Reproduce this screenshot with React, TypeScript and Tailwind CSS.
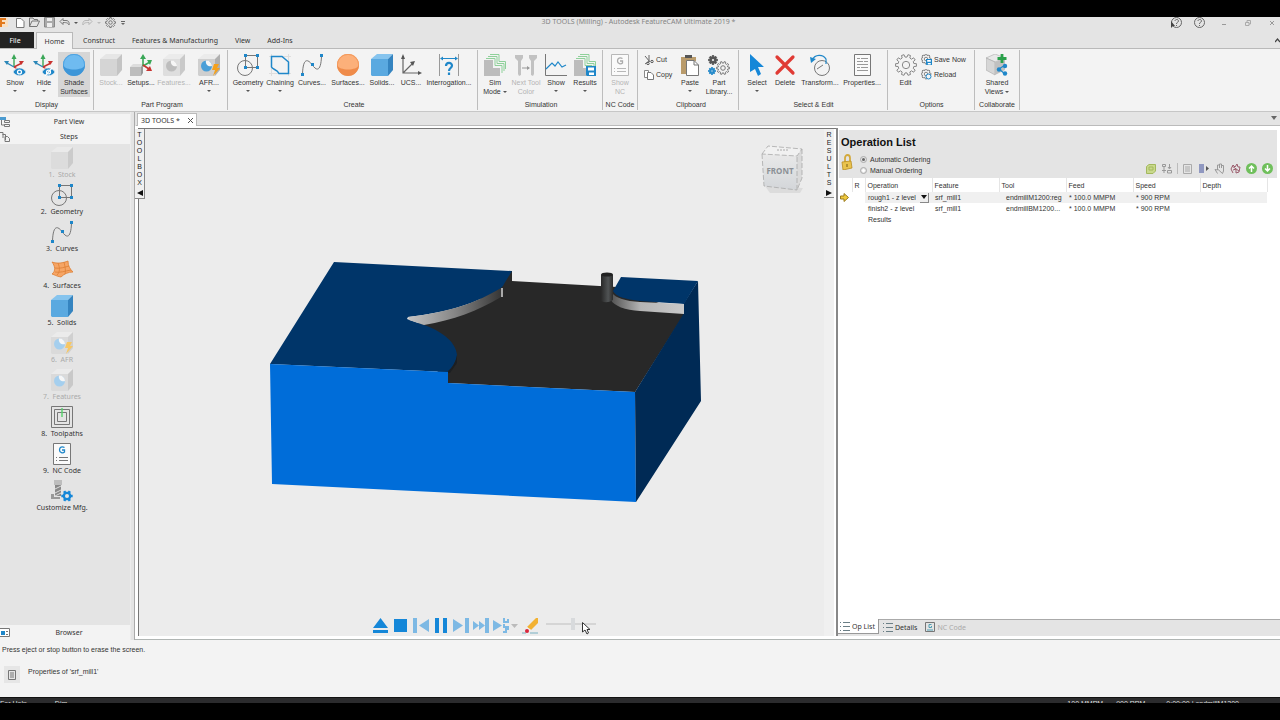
import type { ReactNode } from "react";

const BLUE = "#1f87c9";

function gearPath(cx: number, cy: number, r: number, teeth: number) {
    const pts: string[] = [];
    const step = (Math.PI * 2) / teeth;
    for (let i = 0; i < teeth; i++) {
        const a = i * step;
        const corners = [
            [a - step * 0.3, r * 0.76],
            [a - step * 0.2, r],
            [a + step * 0.2, r],
            [a + step * 0.3, r * 0.76],
        ];
        corners.forEach(([t, d]) => pts.push(`${(cx + Math.cos(t) * d).toFixed(2)},${(cy + Math.sin(t) * d).toFixed(2)}`));
    }
    return `M${pts.join("L")}Z`;
}

type GearProps = { cx: number; cy: number; r: number; color: string; fill?: string; teeth?: number; hole?: number };

function Gear({ cx, cy, r, color, fill = "none", teeth = 8, hole = 0.35 }: GearProps) {
    return (
        <g>
            <path d={gearPath(cx, cy, r, teeth)} fill={fill} stroke={color} strokeWidth="1" strokeLinejoin="round" />
            <circle cx={cx} cy={cy} r={r * hole} fill={fill === "none" ? "none" : "#f3f3f3"} stroke={color} strokeWidth="1" />
        </g>
    );
}

function Svg({ size = 22, children }: { size?: number; children: ReactNode }) {
    return (
        <svg width={size} height={size} viewBox={`0 0 ${size} ${size}`} fill="none" aria-hidden="true" className="shrink-0">
            {children}
        </svg>
    );
}

function CubeShape({ front, top, side }: { front: string; top: string; side: string }) {
    return (
        <g>
            <path d="M0 5L6 0H22L17 5Z" fill={top} />
            <path d="M17 5L22 0V16L17 22Z" fill={side} />
            <path d="M0 5H17V22H1L0 21Z" fill={front} />
        </g>
    );
}

function AxesShape() {
    return (
        <g strokeWidth="1.4">
            <path d="M10 13V4" stroke="#3aa757" />
            <path d="M7.500 5L10 0L12.500 5Z" fill="#3aa757" />
            <path d="M10 13L18 9" stroke="#c8322f" />
            <path d="M15 7L20 7L17 11Z" fill="#c8322f" />
            <path d="M10 13L3 9" stroke="#2b87b8" />
            <path d="M0 7L5 7L3 11Z" fill="#2b87b8" />
            <path d="M10 13L17 17" stroke="#c8322f" />
        </g>
    );
}

function EyeAxes({ hidden = false }: { hidden?: boolean }) {
    return (
        <Svg>
            <AxesShape />
            <path d="M9 18C12 12.500 19 12.500 22 18C19 23 12 23 9 18Z" fill={BLUE} stroke="#f3f3f3" strokeWidth=".7" />
            <circle cx="15.500" cy="18" r="2.600" fill="#fff" />
            <circle cx="15.500" cy="18" r="1.300" fill={BLUE} />
            {hidden && <path d="M12 22L19 14" stroke="#fff" strokeWidth="1.200" />}
        </Svg>
    );
}

function SphereIcon({ light, dark }: { light: string; dark: string }) {
    return (
        <Svg>
            <circle cx="11" cy="11" r="11" fill={dark} />
            <path d="M0 11A11 11 0 0 1 22 11C20 17 2 17 0 11Z" fill={light} />
            <circle cx="11" cy="11" r="10.600" stroke={dark} strokeWidth=".6" />
        </Svg>
    );
}

function CubeIcon({ tone }: { tone: "blue" | "gray" | "pale" }) {
    if (tone === "blue") return <Svg><CubeShape front="#5aa9e0" top="#86c4ee" side="#3584c0" /></Svg>;
    if (tone === "gray") return <Svg><CubeShape front="#d5d5d5" top="#e6e6e6" side="#c4c4c4" /></Svg>;
    return <Svg><CubeShape front="#dcdcdc" top="#eaeaea" side="#cbcbcb" /></Svg>;
}

type FeatureIconProps = { ball: string; bolt?: string; front?: string; side?: string };

function FeatureIcon({ ball, bolt, front = "#dedede", side = "#c9c9c9" }: FeatureIconProps) {
    return (
        <Svg>
            <CubeShape front={front} top="#ebebeb" side={side} />
            <circle cx="8.500" cy="12" r="5.500" fill={ball} />
            <path d="M8 6.500A5.500 5.500 0 0 1 14 12C11 13 7 11 8 6.500Z" fill="#f6f6f6" />
            {bolt && <path d="M16 10H21L19 14H22L15 22L17 16H14Z" fill={bolt} />}
        </Svg>
    );
}

function SetupsIcon() {
    return (
        <Svg>
            <path d="M0 13L3 10H13L11 13Z" fill="#ddd" />
            <path d="M11 13L13 10V19L11 22Z" fill="#999" />
            <path d="M0 13H11V22H0Z" fill="#bdbdbd" />
            <path d="M13 12V3M13 12L20 8" stroke="#3aa757" strokeWidth="1.600" />
            <path d="M10 5L13 0L16 5ZM17 6L22 6L20 11Z" fill="#3aa757" />
            <path d="M13 11L19 15" stroke="#c8322f" strokeWidth="1.600" />
            <path d="M20 12L22 17L16 17Z" fill="#c8322f" />
        </Svg>
    );
}

function GeometryIcon() {
    return (
        <Svg>
            <circle cx="8" cy="14" r="7.500" stroke="#777" />
            <path d="M8.500 1.500H20.500V13.500H8.500Z" stroke="#777" />
            <path d="M7 0h3v3H7zM19 0h3v3h-3zM19 12h3v3h-3zM7 12h3v3H7z" fill={BLUE} />
        </Svg>
    );
}

function ChainingIcon() {
    return (
        <Svg>
            <path d="M0 2.500H22M2.500 0V22M19.500 0V22M0 19.500H22" stroke="#dedede" />
            <path d="M2.500 2.500H13L19.500 8V19.500H10C8 15 4 16 2.500 13Z" stroke={BLUE} strokeWidth="1.500" />
        </Svg>
    );
}

function CurvesIcon() {
    return (
        <Svg>
            <path d="M1.500 20C2 5 6 4 11 10.500C16 18 20 17 20.500 2" stroke="#777" />
            <path d="M0 19h3v3H0zM10 9h3v3h-3zM19 0h3v3h-3z" fill={BLUE} />
        </Svg>
    );
}

function UcsIcon() {
    return (
        <Svg>
            <path d="M3 2V19H20M3 19L13 9" stroke="#666" strokeWidth="1.200" />
            <path d="M1 5L3 0L5 5ZM18 17L22 19L18 21ZM10 8L15 7L13 12Z" fill="#555" />
        </Svg>
    );
}

function InterrogationIcon() {
    return (
        <Svg>
            <path d="M1.500 0V22M20.500 0V22" stroke="#999" />
            <path d="M3 4.500H19" stroke={BLUE} />
            <path d="M2 4.500L5 2.500V6.500ZM20 4.500L17 2.500V6.500Z" fill={BLUE} />
            <path d="M8 12C8 8 14 8 14 11.500C14 14 11 14 11 17M11 18.500V21" stroke={BLUE} strokeWidth="2.200" />
        </Svg>
    );
}

function SimShape() {
    return (
        <g>
            <path d="M0 6H9V14H16V22H0Z" fill="#bcbcbc" />
            <path d="M2 4.500H11V11.500H18V19M4 2.500H13V9.500H20V17M6 .500H15V7.500H21.500V15" stroke="#8fd19a" />
        </g>
    );
}

function ToolColorIcon() {
    return (
        <Svg>
            <path d="M0 1H8V4L6 7V21L4 22L3 20V7L0 4ZM14 1H22V4L19 7V20L18 22L16 21V7L14 4Z" fill="#c2c2c2" />
            <path d="M7 14H14" stroke="#999" />
            <path d="M12 12L15 14L12 16Z" fill="#999" />
        </Svg>
    );
}

function ChartIcon() {
    return (
        <Svg>
            <path d="M.500 0V21.500H22" stroke="#777" />
            <path d="M1 15L7 9L10 12L13 8L17 13L21 11" stroke={BLUE} strokeWidth="1.200" />
        </Svg>
    );
}

function FloppyShape({ x, y, size, color }: { x: number; y: number; size: number; color: string }) {
    return (
        <g transform={`translate(${x} ${y}) scale(${size / 10})`}>
            <path d="M0 0H10V10H1L0 9Z" fill={color} />
            <path d="M2 1.500H8V4.500H2ZM3 6.500H8V9H3Z" fill="#fff" />
        </g>
    );
}

function ResultsIcon() {
    return (
        <Svg>
            <SimShape />
            <FloppyShape x={12} y={12} size={10} color={BLUE} />
        </Svg>
    );
}

function CodeIcon({ color, line }: { color: string; line: string }) {
    return (
        <Svg>
            <path d="M2.500 .500H19.500V21.500H2.500Z" stroke={line} fill="#fafafa" />
            <path d="M13.500 4.500C11 3 8.500 4 8.500 7C8.500 10 12 10.500 13.500 9V7H11" stroke={color} strokeWidth="1.300" />
            <path d="M5 14.500H6M8 14.500H17M5 17.500H6M8 17.500H17" stroke={line} />
        </Svg>
    );
}

function PasteIcon() {
    return (
        <Svg>
            <path d="M2 3H17V7H8V20H2Z" fill="#b99b6b" />
            <path d="M6 1H13V4H6Z" fill="#555" />
            <path d="M7.500 6.500H15L19.500 11V21.500H7.500Z" fill="#fff" stroke="#777" />
            <path d="M15 6.500V11H19.500" stroke="#777" />
        </Svg>
    );
}

function LibraryIcon() {
    return (
        <Svg>
            <Gear cx={5} cy={6} r={4.500} color="#555" fill="#555" />
            <Gear cx={4} cy={17} r={3.500} color={BLUE} fill={BLUE} />
            <Gear cx={15} cy={14} r={6.500} color="#777" teeth={10} />
        </Svg>
    );
}

function SelectIcon() {
    return <Svg><path d="M4 0L18 13H12L15 20L12 22L9 15L4 18Z" fill="#1587d8" /></Svg>;
}

function DeleteIcon() {
    return <Svg><path d="M3 3L19 19M19 3L3 19" stroke="#e03a34" strokeWidth="3.200" strokeLinecap="round" /></Svg>;
}

function TransformIcon() {
    return (
        <Svg>
            <circle cx="13" cy="14" r="7.500" stroke="#777" />
            <path d="M8 15L14 11" stroke="#777" />
            <path d="M3 6C6 0 14 0 17 5V10" stroke={BLUE} strokeWidth="1.200" />
            <path d="M1 3L7 5L2 9Z" fill={BLUE} />
        </Svg>
    );
}

function PropertiesIcon() {
    return (
        <Svg>
            <path d="M3.500 .500H19.500V21.500H3.500Z" stroke="#777" fill="#fafafa" />
            <path d="M6 4.500H9M10 4.500H17M6 7.500H12M13 7.500H17M6 10.500H17M6 13.500H9M10 13.500H17M6 16.500H17" stroke="#999" />
        </Svg>
    );
}

function SharedIcon() {
    return (
        <Svg>
            <path d="M9 0L19 4L9 8L0 4Z" fill="#e8e8e8" stroke="#aaa" strokeWidth=".6" />
            <path d="M0 4L9 8V21L0 16Z" fill="#d6d6d6" stroke="#aaa" strokeWidth=".6" />
            <path d="M9 8L19 4V16L9 21Z" fill="#c0c0c0" />
            <path d="M16 0V9M11.500 4.500H20.500" stroke="#2aa14a" strokeWidth="2.800" />
            <path d="M19 11L13 15L19 20" stroke={BLUE} strokeWidth="1.200" />
            <circle cx="19" cy="12" r="2.200" fill={BLUE} />
            <circle cx="13" cy="15.500" r="2.200" fill={BLUE} />
            <circle cx="19" cy="19.500" r="2.200" fill={BLUE} />
        </Svg>
    );
}

function SurfaceIcon() {
    return (
        <Svg>
            <path d="M1 4C6 6 12 5 17 3C17 8 19 11 22 14C17 14 13 16 10 19C5 18 4 17 1 16C5 13 4 8 1 4Z" fill="#f6a565" stroke="#dd7f35" strokeWidth=".8" />
            <path d="M4 10C9 11 14 9 18 8M4 14C9 15 14 13 20 12M7 5C9 10 9 14 6 17M13 4C14 9 15 12 14 16" stroke="#dd7f35" strokeWidth=".8" />
        </Svg>
    );
}

function ToolpathIcon() {
    return (
        <Svg>
            <path d="M.500 .500H21.500V21.500H.500ZM3.500 3.500H18.500V18.500H3.500ZM6.500 6.500H15.500V15.500H6.500Z" stroke="#777" />
            <path d="M11 2V11" stroke="#55d36a" strokeWidth="1.400" />
        </Svg>
    );
}

function CustomizeIcon() {
    return (
        <Svg>
            <path d="M3 0H11V5H3Z" fill="#bdbdbd" />
            <path d="M4 5H10V16H4Z" fill="#888" />
            <path d="M4 9L10 6M4 13L10 10M4 16L10 13" stroke="#ddd" />
            <path d="M0 14H3V17H9V19H0Z" fill="#999" />
            <path d={gearPath(16, 16, 5.800, 6)} fill="#1587d8" />
            <circle cx="16" cy="16" r="2" fill="#e4e4e4" />
        </Svg>
    );
}

function Caret() {
    return <span className="inline-block h-0 w-0 border-x-2 border-t-2 border-x-transparent border-t-[#555]" />;
}

type RibbonButtonProps = {
    icon: ReactNode;
    label: string;
    label2?: string;
    width: string;
    menu?: boolean;
    disabled?: boolean;
    active?: boolean;
}

function RibbonButton({ icon, label, label2, width, menu, disabled, active }: RibbonButtonProps) {
    return (
        <button
            type="button"
            disabled={disabled}
            className={`flex h-[45px] shrink-0 flex-col items-center whitespace-nowrap pt-[2px] leading-[9px] ${width} ${active ? "bg-[#d6d6d6]" : ""} ${disabled ? "text-[#b4b4b4]" : "text-[#333]"}`}
        >
            {icon}
            <span className="mt-[2px]">{label}</span>
            {label2 && (
                <span className="flex items-center gap-[2px]">
                    {label2}
                    {menu && <Caret />}
                </span>
            )}
            {menu && !label2 && <span className="flex h-[8px] items-center"><Caret /></span>}
        </button>
    );
}

function RibbonGroup({ title, width, children }: { title: string; width: string; children: ReactNode }) {
    return (
        <section aria-label={title} className={`my-px flex shrink-0 flex-col justify-between border-r border-[#bdbdbd] pt-[2px] text-[#333] ${width}`}>
            <div className="flex">{children}</div>
            <h2 className="text-center leading-[11px] whitespace-nowrap">{title}</h2>
        </section>
    );
}

function SmallButton({ icon, label }: { icon: ReactNode; label: string }) {
    return (
        <button type="button" className="flex h-[15px] items-center gap-[2px] whitespace-nowrap">
            {icon}
            {label}
        </button>
    );
}

function TitleBar() {
    return (
        <header className="flex h-[15px] items-start justify-between pr-[5px] text-[#666]">
            <div className="flex w-[240px] items-center">
                <svg width="8" height="10" viewBox="0 0 8 10" aria-hidden="true">
                    <path d="M0 0H8V9H0Z" fill="#f8dfc2" />
                    <path d="M0 0H6V2H2V4H5V6H2V9H0Z" fill="#e2791d" />
                </svg>
                <div className="ml-[7px] flex items-center gap-1">
                    <button type="button" aria-label="New"><Svg size={10}><path d="M1.500 .500H6L9 3.500V9.500H1.500Z" fill="#fff" stroke="#777" /></Svg></button>
                    <button type="button" aria-label="Open"><Svg size={11}><path d="M.500 9.500V1H4L5 2.500H8.500V4M.500 9.500L3 4H10.500L8 9.500Z" stroke="#777" /></Svg></button>
                    <button type="button" aria-label="Save"><Svg size={11}><path d="M.500 .500H10.500V10H.500Z" fill="#aaa" stroke="#888" /><path d="M3 1H8V4H3ZM3 6H8V10H3Z" fill="#eee" /></Svg></button>
                    <button type="button" aria-label="Undo"><Svg size={11}><path d="M1 4.500L4 1.500V3.500H7C10 3.500 10.500 6 10 8C9 6 8 5.500 4 5.500V7.500Z" stroke="#777" /></Svg></button>
                    <Caret />
                    <button type="button" aria-label="Redo" disabled><Svg size={11}><path d="M10 4.500L7 1.500V3.500H4C1 3.500 .500 6 1 8C2 6 3 5.500 7 5.500V7.500Z" stroke="#b5b5b5" /></Svg></button>
                    <span className="h-0 w-0 border-x-2 border-t-2 border-x-transparent border-t-[#bbb]" />
                    <button type="button" aria-label="Settings"><Svg size={11}><Gear cx={5.500} cy={5.500} r={5} color="#777" /></Svg></button>
                    <button type="button" aria-label="Customize quick access" className="ml-px"><Svg size={4}><path d="M0 .500H4" stroke="#666" /><path d="M0 2H4L2 4Z" fill="#666" /></Svg></button>
                </div>
            </div>
            <h1 className="font-['Noto_Sans','Open_Sans',sans-serif] leading-[10px] text-[#858585]">3D TOOLS (Milling) - Autodesk FeatureCAM Ultimate 2019 *</h1>
            <div className="flex w-[238px] items-center justify-end gap-3">
                {["Context help", "Help"].map((name) => (
                    <button key={name} type="button" aria-label={name}>
                        <Svg size={11}>
                            <circle cx="5.500" cy="5.500" r="5" stroke="#666" />
                            <path d="M4 4C4 2 7.500 2 7.500 4C7.500 5.500 5.500 5 5.500 7M5.500 8V9" stroke="#666" />
                            {name === "Context help" && <path d="M0 4V11L2 9L4 9Z" fill="#444" />}
                        </Svg>
                    </button>
                ))}
                <button type="button" aria-label="Minimize" className="ml-1"><Svg size={6}><path d="M1 4.500H5" stroke="#999" /></Svg></button>
                <button type="button" aria-label="Restore" className="ml-[6px]"><Svg size={6}><path d="M.500 2.500H4V5.500H.500ZM2 2V.500H5.500V4H4" stroke="#aaa" /></Svg></button>
                <button type="button" aria-label="Close" className="ml-[6px]"><Svg size={6}><path d="M1 1L5 5M5 1L1 5" stroke="#999" /></Svg></button>
            </div>
        </header>
    );
}

function MenuTabs() {
    return (
        <nav className="flex h-[17px] items-stretch border-b border-[#b9b9b9] font-['Noto_Sans','Open_Sans',sans-serif] text-[#333]">
            <button type="button" className="w-[34px] bg-[#222] pr-1 text-white">File</button>
            <button type="button" className="-mb-px ml-[2px] w-[37px] border border-b-0 border-[#b9b9b9] bg-[#f3f3f3]">Home</button>
            <div className="ml-[10px] flex gap-[17px]">
                <button type="button">Construct</button>
                <button type="button">Features &amp; Manufacturing</button>
                <button type="button">View</button>
                <button type="button">Add-Ins</button>
            </div>
            <button type="button" aria-label="Collapse ribbon" className="ml-auto"><Svg size={5}><path d="M0 4L2.500 1L5 4" stroke="#444" strokeWidth="1.200" /></Svg></button>
        </nav>
    );
}

function Ribbon() {
    return (
        <div className="flex h-[63px] border-b border-[#c6c6c6] bg-[#f3f3f3]">
            <RibbonGroup title="Display" width="w-[94px]">
                <RibbonButton icon={<EyeAxes />} label="Show" width="w-[30px]" menu />
                <RibbonButton icon={<EyeAxes hidden />} label="Hide" width="w-[28px]" menu />
                <RibbonButton icon={<SphereIcon light="#6fbbf0" dark="#3d96d8" />} label="Shade" label2="Surfaces" width="w-[32px]" active />
            </RibbonGroup>
            <RibbonGroup title="Part Program" width="w-[134px] pl-[3px]">
                <RibbonButton icon={<CubeIcon tone="gray" />} label="Stock..." width="w-[28px]" disabled />
                <RibbonButton icon={<SetupsIcon />} label="Setups..." width="w-[32px]" />
                <RibbonButton icon={<FeatureIcon ball="#bdbdbd" />} label="Features..." width="w-[34px]" disabled />
                <RibbonButton icon={<FeatureIcon ball="#4a9fd8" bolt="#f5a11c" front="#cfcfcf" side="#b0b0b0" />} label="AFR..." width="w-[36px]" menu />
            </RibbonGroup>
            <RibbonGroup title="Create" width="w-[250px] pl-[3px]">
                <RibbonButton icon={<GeometryIcon />} label="Geometry" width="w-[34px]" menu />
                <RibbonButton icon={<ChainingIcon />} label="Chaining" width="w-[30px]" menu />
                <RibbonButton icon={<CurvesIcon />} label="Curves..." width="w-[34px]" />
                <RibbonButton icon={<SphereIcon light="#fcb07a" dark="#ef8b4a" />} label="Surfaces..." width="w-[38px]" />
                <RibbonButton icon={<CubeIcon tone="blue" />} label="Solids..." width="w-[30px]" />
                <RibbonButton icon={<UcsIcon />} label="UCS..." width="w-[28px]" />
                <RibbonButton icon={<InterrogationIcon />} label="Interrogation..." width="w-[48px]" />
            </RibbonGroup>
            <RibbonGroup title="Simulation" width="w-[125px] pl-[2px]">
                <RibbonButton icon={<Svg><SimShape /></Svg>} label="Sim" label2="Mode" width="w-[30px]" menu />
                <RibbonButton icon={<ToolColorIcon />} label="Next Tool" label2="Color" width="w-[32px]" disabled />
                <RibbonButton icon={<ChartIcon />} label="Show" width="w-[28px]" menu />
                <RibbonButton icon={<ResultsIcon />} label="Results" width="w-[30px]" menu />
            </RibbonGroup>
            <RibbonGroup title="NC Code" width="w-[35px]">
                <RibbonButton icon={<CodeIcon color="#aaa" line="#b8b8b8" />} label="Show" label2="NC" width="w-[34px]" disabled />
            </RibbonGroup>
            <RibbonGroup title="Clipboard" width="w-[101px] pl-[6px]">
                <div className="flex w-[31px] flex-col">
                    <SmallButton label="Cut" icon={<Svg size={10}><path d="M1 1L6 7M5 0V6L1 9" stroke="#666" /><circle cx="4" cy="8.500" r="1.200" stroke="#555" /><circle cx="8" cy="6.500" r="1.200" stroke="#555" /></Svg>} />
                    <SmallButton label="Copy" icon={<Svg size={10}><path d="M.500 .500H4.500V7.500H.500Z" fill="#fff" stroke="#888" /><path d="M3.500 2.500H7L9.500 5V9.500H3.500Z" fill="#fff" stroke="#777" /></Svg>} />
                </div>
                <RibbonButton icon={<PasteIcon />} label="Paste" width="w-[30px]" menu />
                <RibbonButton icon={<LibraryIcon />} label="Part" label2="Library..." width="w-[28px]" />
            </RibbonGroup>
            <RibbonGroup title="Select & Edit" width="w-[149px] pl-[5px] pr-1">
                <RibbonButton icon={<SelectIcon />} label="Select" width="w-[26px]" menu />
                <RibbonButton icon={<DeleteIcon />} label="Delete" width="w-[30px]" />
                <RibbonButton icon={<TransformIcon />} label="Transform..." width="w-[40px]" />
                <RibbonButton icon={<PropertiesIcon />} label="Properties..." width="w-[44px]" />
            </RibbonGroup>
            <RibbonGroup title="Options" width="w-[87px] pl-[2px] pr-px">
                <RibbonButton icon={<Svg><Gear cx={11} cy={11} r={10.500} color="#888" teeth={10} /></Svg>} label="Edit" width="w-[31px]" />
                <div className="flex flex-col">
                    <SmallButton label="Save Now" icon={<Svg size={11}><Gear cx={5} cy={5} r={5} color="#888" /><FloppyShape x={5} y={5} size={6} color={BLUE} /></Svg>} />
                    <SmallButton label="Reload" icon={<Svg size={11}><Gear cx={5} cy={5} r={5} color="#888" /><circle cx="7.500" cy="7.500" r="2.500" fill="#f3f3f3" stroke={BLUE} /></Svg>} />
                </div>
            </RibbonGroup>
            <RibbonGroup title="Collaborate" width="w-[45px]">
                <RibbonButton icon={<SharedIcon />} label="Shared" label2="Views" width="w-[44px]" menu />
            </RibbonGroup>
        </div>
    );
}

const STEPS: { label: string; icon: ReactNode; disabled?: boolean }[] = [
    { label: "1.  Stock", icon: <CubeIcon tone="pale" />, disabled: true },
    { label: "2.  Geometry", icon: <GeometryIcon /> },
    { label: "3.  Curves", icon: <CurvesIcon /> },
    { label: "4.  Surfaces", icon: <SurfaceIcon /> },
    { label: "5.  Solids", icon: <CubeIcon tone="blue" /> },
    { label: "6.  AFR", icon: <FeatureIcon ball="#a5cfee" bolt="#f6c766" front="#dadada" side="#d0d0d0" />, disabled: true },
    { label: "7.  Features", icon: <FeatureIcon ball="#a5cfee" front="#dadada" side="#c8c8c8" />, disabled: true },
    { label: "8.  Toolpaths", icon: <ToolpathIcon /> },
    { label: "9.  NC Code", icon: <CodeIcon color={BLUE} line="#777" /> },
    { label: "Customize Mfg.", icon: <CustomizeIcon /> },
];

function PanelHeader({ icon, label }: { icon: ReactNode; label: string }) {
    return (
        <button type="button" className="flex h-[15px] w-full items-center bg-[#f3f3f3]">
            {icon}
            <span className="flex-1 pr-[2px]">{label}</span>
        </button>
    );
}

function StepsPanel() {
    return (
        <aside className="flex w-[131px] shrink-0 flex-col border-r border-[#ececec] pt-[2px] font-['Noto_Sans','Open_Sans',sans-serif] text-[#333]">
            <PanelHeader label="Part View" icon={<Svg size={10}><path d="M0 0H6V3H0Z" fill="#4c9bd0" /><path d="M1.500 3V8H5M4.500 3.500H9.500V5.500H4.500ZM4.500 7.500H9.500V9.500H4.500Z" stroke="#777" /></Svg>} />
            <PanelHeader label="Steps" icon={<Svg size={10}><path d="M0 .500H3V6M2.500 2.500H5.500V8M5 4.500H7.500L9.500 6.500V9.500H5Z" stroke="#777" /></Svg>} />
            <ol className="flex flex-1 flex-col pt-[3px] pr-[6px]">
                {STEPS.map((step) => (
                    <li key={step.label} className="flex h-[37px] justify-center">
                        <button
                            type="button"
                            disabled={step.disabled}
                            className={`flex flex-col items-center justify-start whitespace-pre leading-[11px] ${step.disabled ? "text-[#aaa]" : ""}`}
                        >
                            {step.icon}
                            {step.label}
                        </button>
                    </li>
                ))}
            </ol>
            <PanelHeader label="Browser" icon={<Svg size={10}><path d="M0 .500H9.500V8.500H0" fill="#fff" stroke="#777" /><path d="M1 3H5V7H1Z" fill={BLUE} /><path d="M6 3.500H8M6 6.500H8" stroke="#777" /></Svg>} />
        </aside>
    );
}

function VerticalTab({ word, arrow, className }: { word: string; arrow: string; className: string }) {
    return (
        <button
            type="button"
            aria-label={word}
            className={`absolute top-0 z-10 flex flex-col items-center border-r border-b border-[#888] bg-[#f0f0f0] pt-[2px] leading-[8px] text-[#222] ${className}`}
        >
            {word.split("").map((letter, i) => <span key={i}>{letter}</span>)}
            <span className="mt-[3px]">
                <Svg size={6}><path d={arrow} fill="#111" /></Svg>
            </span>
        </button>
    );
}

function MilledPart() {
    return (
        <svg viewBox="139 129 685 507" className="absolute inset-0 h-full w-full" role="img" aria-label="Stock being milled">
            <defs>
                <linearGradient id="leftWall" x1="408" x2="503" y1="0" y2="0" gradientUnits="userSpaceOnUse">
                    <stop offset="0" stopColor="#c4c4c4" />
                    <stop offset=".5" stopColor="#858585" />
                    <stop offset="1" stopColor="#333" />
                </linearGradient>
                <linearGradient id="rightWall" x1="612" x2="684" y1="0" y2="0" gradientUnits="userSpaceOnUse">
                    <stop offset="0" stopColor="#555" />
                    <stop offset=".4" stopColor="#b5b5b5" />
                    <stop offset="1" stopColor="#c9c9c9" />
                </linearGradient>
                <linearGradient id="cutter" x1="601" x2="613" y1="0" y2="0" gradientUnits="userSpaceOnUse">
                    <stop offset="0" stopColor="#282828" />
                    <stop offset=".6" stopColor="#505354" />
                    <stop offset="1" stopColor="#2c2c2c" />
                </linearGradient>
                <linearGradient id="cubeFace" x1="0" x2="0" y1="0" y2="1">
                    <stop offset="0" stopColor="#e9e9e9" />
                    <stop offset="1" stopColor="#d3d6d9" />
                </linearGradient>
            </defs>
            <path d="M500 271H512V281L617 287L685 313L635 392L448 383L400 330L480 300Z" fill="#282828" />
            <path d="M334 262L512 271L504 284Q503 287 498 290C476 303 450 312 408 317L407 319L424 325C444 332 456 343 457 355C456 362 452 368 448 372L270 364Z" fill="#003569" />
            <path d="M408 317C450 312 476 303 501 288V297C478 311 453 320 424 325L409 320Z" fill="url(#leftWall)" />
            <path d="M501 288H503V297H501Z" fill="#aaa" />
            <path d="M457 355V363L450 373H448V371C452 368 456 362 457 355Z" fill="#1c1f22" />
            <path d="M270 364L448 372V383L635 392L636 502L272 484Z" fill="#006dd9" />
            <path d="M635 392L684 313V303L698 281L701 401L636 502Z" fill="#002a55" />
            <path d="M621 277L698 281L684 304L640 301C625 299 616 297 613 291Z" fill="#003569" />
            <path d="M612 293C616 298 625 301 640 302L684 304V314L640 311C625 310 614 306 611 300Z" fill="url(#rightWall)" />
            <path d="M601 275Q607 271 613 275V300Q607 304 601 301Z" fill="url(#cutter)" />
            <ellipse cx="607" cy="274.500" rx="6" ry="2" fill="#222" />
            <g>
                <path d="M765 186L803 188L800 193L770 193Z" fill="#dcdcdc" />
                <path d="M762 154L768 146L802 149L797 156Z" fill="#f1f1f1" />
                <path d="M797 156L802 149V178L797 190Z" fill="#dadada" />
                <path d="M762 154L797 156V190L764 186Z" fill="url(#cubeFace)" />
                <path d="M762 154L768 146L802 149L797 156ZM802 149V178L797 190V156M762 154L764 186L797 190" fill="none" stroke="#aaa" strokeWidth=".8" strokeDasharray="5 2" />
                <path d="M777 150H789" stroke="#aaa" strokeDasharray="2 1" />
                <text x="780" y="174" textAnchor="middle" fontSize="8" fontWeight="700" fill="#8b9096" fontFamily="'Noto Sans',sans-serif">FRONT</text>
            </g>
        </svg>
    );
}

type PlayerItem = { name: string; width: number; color: string; path: string };

const PLAYER: PlayerItem[] = [
    { name: "Eject", width: 15, color: "#1587d8", path: "M7.500 0L15 10H0ZM0 12H15V15H0Z" },
    { name: "Stop", width: 13, color: "#1587d8", path: "M0 1H13V14H0Z" },
    { name: "Step back", width: 16, color: "#7db9e4", path: "M0 0H4V15H0ZM16 1V14L6 7.500Z" },
    { name: "Pause", width: 12, color: "#1587d8", path: "M0 0H4V15H0ZM8 0H12V15H8Z" },
    { name: "Step forward", width: 16, color: "#7db9e4", path: "M12 0H16V15H12ZM0 1V14L10 7.500Z" },
];

const PLAYER_FAST: PlayerItem[] = [
    { name: "Fast forward", width: 16, color: "#7db9e4", path: "M0 3V12L6 7.500ZM6 3V12L12 7.500ZM12 0H16V15H12Z" },
    { name: "Play to next", width: 25, color: "#7db9e4", path: "M0 2V13L9 7.500ZM10 0H12V3H14V1H16V5H12V8H16V12H14V15H10V13H12V10H10V6H12V5H10Z" },
];

function PlayerButton({ item }: { item: PlayerItem }) {
    return (
        <button type="button" aria-label={item.name}>
            <svg width={item.width} height="15" viewBox={`0 0 ${item.width} 15`} aria-hidden="true">
                <path d={item.path} fill={item.color} />
                {item.name === "Play to next" && <path d="M18 6H25L21.500 10Z" fill="#bbb" />}
            </svg>
        </button>
    );
}

function PlayerBar() {
    return (
        <div className="absolute bottom-[3px] left-[234px] flex h-[15px] items-center gap-1">
            <div className="flex gap-[6px]">
                {PLAYER.map((item) => <PlayerButton key={item.name} item={item} />)}
            </div>
            {PLAYER_FAST.map((item) => <PlayerButton key={item.name} item={item} />)}
            <button type="button" aria-label="Erase">
                <svg width="16" height="16" viewBox="0 0 16 16" aria-hidden="true">
                    <path d="M0 15H4M8 15H16" stroke="#9fc4cf" strokeWidth="1.500" />
                    <path d="M14 0H16V5L9 12L5 9Z" fill="#f2b233" />
                    <path d="M5 9L9 12L7 13L4 11Z" fill="#eee" />
                    <circle cx="5" cy="13" r="2" fill="#d9263c" />
                </svg>
            </button>
            <div className="relative flex">
                <input
                    type="range"
                    aria-label="Simulation speed"
                    defaultValue={55}
                    className="mb-1 ml-1 h-3 w-[50px] appearance-none bg-transparent [&::-webkit-slider-runnable-track]:h-[2px] [&::-webkit-slider-runnable-track]:bg-[#d5d5d5] [&::-webkit-slider-thumb]:-mt-[5px] [&::-webkit-slider-thumb]:h-3 [&::-webkit-slider-thumb]:w-1 [&::-webkit-slider-thumb]:appearance-none [&::-webkit-slider-thumb]:bg-[#d8dadc]"
                />
                <svg width="9" height="13" viewBox="0 0 9 13" aria-hidden="true" className="absolute top-1 left-10">
                    <path d="M.500 .500V10L3 8L5 12L6.500 11L5 7.500H8Z" fill="#fff" stroke="#333" />
                </svg>
            </div>
        </div>
    );
}

const OPERATIONS = [
    { operation: "rough1 - z level", feature: "srf_mill1", tool: "endmillM1200:reg", feed: "* 100.0 MMPM", speed: "* 900 RPM" },
    { operation: "finish2 - z level", feature: "srf_mill1", tool: "endmillBM1200...", feed: "* 100.0 MMPM", speed: "* 900 RPM" },
    { operation: "Results", feature: "", tool: "", feed: "", speed: "" },
];

const TOOLS: { name: string; icon: ReactNode }[] = [
    { name: "Group", icon: <path d="M1.500 3.500L4 1.500H10.500V8L8 10.500H1.500ZM4 4H8V7H4Z" fill="#c9d98c" stroke="#a3b85e" /> },
    { name: "Order", icon: <path d="M1.500 1.500H4.500V3.500H1.500ZM3 4V10M1 7.500H5M8.500 1V5M7 4L8.500 6L10 4M6.500 7.500H10.500V10H6.500Z" stroke="#999" /> },
    { name: "Details", icon: <path d="M1.500 1.500H9.500V10.500H1.500ZM3 4H8M3 6H8M3 8H8" stroke="#aaa" /> },
    { name: "Tool", icon: <><path d="M1 1H6V10H1Z" fill="#9098c0" /><path d="M8 3L11 5.500L8 8Z" fill="#555" /></> },
    { name: "Hold", icon: <path d="M3.500 10.500L1 6.500L3.500 7V2.500M3.500 6V2H5.500V1H7.500V2.500H9.500V8L8.500 10.500ZM5.500 2V5M7.500 2V5" stroke="#999" /> },
    { name: "Release", icon: <path d="M3 10L1 6L3 2L5 4L7 1L8 4L10 4L9 9L6 10L6 6L3 7M2 3L9 8" stroke="#9b5c6c" /> },
    { name: "Move up", icon: <><circle cx="5.500" cy="5.500" r="5.500" fill="#6fbf5b" /><path d="M5.500 9V3M3 5.500L5.500 3L8 5.500" stroke="#fff" strokeWidth="1.500" /></> },
    { name: "Move down", icon: <><circle cx="5.500" cy="5.500" r="5.500" fill="#6fbf5b" /><path d="M5.500 2V8M3 5.500L5.500 8L8 5.500" stroke="#fff" strokeWidth="1.500" /></> },
];

function OrderingRadio({ label, checked }: { label: string; checked?: boolean }) {
    return (
        <label className="flex h-[11px] items-center gap-[3px]">
            <input
                type="radio"
                name="ordering"
                defaultChecked={checked}
                className="h-[7px] w-[7px] appearance-none rounded-full border border-[#aaa] bg-white bg-clip-content p-px checked:bg-[#666]"
            />
            {label}
        </label>
    );
}

function ListIcon() {
    return <Svg size={10}><path d="M0 1.500H1M3 1.500H10M0 5.500H1M3 5.500H10M0 9.500H1M3 9.500H10" stroke="#6b7f86" /></Svg>;
}

function OperationPanel() {
    return (
        <section className="flex w-[444px] shrink-0 flex-col border-l-2 border-[#888] bg-white text-[#333]">
            <div className="mt-[2px] mr-[3px] ml-px flex h-[48px] items-end justify-between bg-[#e4e4e4]">
                <div className="self-start pl-[2px]">
                    <h2 className="mt-[6px] text-[11px] leading-[13px] font-bold text-[#111]">Operation List</h2>
                    <div className="mt-[5px] flex items-start">
                        <svg width="12" height="16" viewBox="0 0 12 16" fill="none" aria-hidden="true">
                            <path d="M4 8V4C4 0 9 0 9 4V9" stroke="#d3a93c" strokeWidth="1.800" />
                            <path d="M1 8L10 7L11 14L2 16Z" fill="#eac34e" stroke="#b98d22" strokeWidth=".8" />
                            <path d="M6 10V13" stroke="#7b5c10" />
                        </svg>
                        <div className="ml-[7px] flex flex-col">
                            <OrderingRadio label="Automatic Ordering" checked />
                            <OrderingRadio label="Manual Ordering" />
                        </div>
                    </div>
                </div>
                <div className="mb-1 flex items-center gap-[5px] pr-1">
                    {TOOLS.map((tool) => (
                        <button key={tool.name} type="button" aria-label={tool.name} className={tool.name === "Details" ? "border-l border-[#bbb] pl-1" : ""}>
                            <Svg size={11}>{tool.icon}</Svg>
                        </button>
                    ))}
                </div>
            </div>
            <table className="ml-px w-[428px] table-fixed border-collapse text-left leading-[11px] whitespace-nowrap">
                <colgroup>
                    <col className="w-[13px]" />
                    <col className="w-[13px]" />
                    <col span={6} className="w-[67px]" />
                </colgroup>
                <thead>
                    <tr className="h-[14px]">
                        <th aria-label="Current" className="border-r border-[#e5e5e5]" />
                        {["R", "Operation", "Feature", "Tool", "Feed", "Speed", "Depth"].map((name) => (
                            <th key={name} className="border-r border-[#e5e5e5] p-0 pl-[2px] font-normal">{name}</th>
                        ))}
                    </tr>
                </thead>
                <tbody>
                    {OPERATIONS.map((row, i) => (
                        <tr key={row.operation} className="h-[11px]">
                            <td className="p-0 pl-px">
                                {i === 0 && <Svg size={9}><path d="M.500 3H4V.500L8.500 4.500L4 8.500V6H.500Z" fill="#f0ca3e" stroke="#9a7a1c" /></Svg>}
                            </td>
                            <td className="p-0" />
                            <td className={`p-0 pl-[3px] ${i === 0 ? "bg-[#f0f0f0]" : ""}`}>
                                <div className="flex items-center justify-between">
                                    {row.operation}
                                    {i === 0 && (
                                        <button type="button" aria-label="Operation options" className="mr-[3px] flex h-[10px] w-[9px] items-center justify-center border-r border-b border-[#888] bg-[#eee]">
                                            <Svg size={6}><path d="M0 1H6L3 5Z" fill="#111" /></Svg>
                                        </button>
                                    )}
                                </div>
                            </td>
                            <td className={`p-0 pl-[3px] ${i === 0 ? "bg-[#f0f0f0]" : ""}`}>{row.feature}</td>
                            <td className={`p-0 pl-[7px] ${i === 0 ? "bg-[#f0f0f0]" : ""}`}>{row.tool}</td>
                            <td className={`p-0 pl-[3px] ${i === 0 ? "bg-[#f0f0f0]" : ""}`}>{row.feed}</td>
                            <td className={`p-0 pl-[3px] ${i === 0 ? "bg-[#f0f0f0]" : ""}`}>{row.speed}</td>
                            <td className={`p-0 ${i === 0 ? "bg-[#f0f0f0]" : ""}`} />
                        </tr>
                    ))}
                </tbody>
            </table>
            <div className="mt-auto flex h-[17px] border-t border-[#aaa] bg-[#e4e4e4] pb-[2px] font-['Noto_Sans','Open_Sans',sans-serif]">
                <button type="button" className="-mt-px flex items-center gap-[2px] border-r border-b border-[#999] bg-white pr-[3px] pl-[2px]"><ListIcon />Op List</button>
                <button type="button" className="flex items-center gap-[2px] px-1"><ListIcon />Details</button>
                <button type="button" disabled className="flex items-center gap-[2px] px-1 text-[#aaa]">
                    <Svg size={10}><path d="M.500 .500H9.500V9.500H.500Z" stroke="#777" /><path d="M6.500 2.500H4V5.500H6.500V4M2 8H8" stroke="#4f9fb3" /></Svg>
                    NC Code
                </button>
            </div>
        </section>
    );
}

function Workspace() {
    return (
        <main className="flex min-w-0 flex-1 flex-col border-l border-[#aaa]">
            <div className="ml-px flex h-[14px] shrink-0 items-end justify-between border-b border-[#bbb] pr-[3px] font-['Noto_Sans','Open_Sans',sans-serif]">
                <div className="-mb-px ml-px flex h-[13px] items-center gap-[8px] border border-b-0 border-[#bbb] bg-white pr-[3px] pl-[3px] text-[#333]">
                    3D TOOLS *
                    <button type="button" aria-label="Close 3D TOOLS"><Svg size={5}><path d="M0 0L5 5M5 0L0 5" stroke="#555" /></Svg></button>
                </div>
                <button type="button" aria-label="Open documents" className="mb-[5px] h-0 w-0 border-x-3 border-t-4 border-x-transparent border-t-[#666]" />
            </div>
            <div className="relative flex flex-1 border-b border-[#b0b5b3] bg-white pt-[2px] pb-[3px]">
                <div className="relative ml-[3px] flex flex-1 border-t border-l border-[#777] bg-[#ececec]">
                    <div className="relative flex-1">
                        <MilledPart />
                        <PlayerBar />
                        <VerticalTab word="TOOLBOX" arrow="M6 0V6L0 3Z" className="-left-1 h-[70px] w-[10px]" />
                    </div>
                    <div className="relative w-[12px] border-r-2 border-white bg-[#f0f0f0]">
                        <VerticalTab word="RESULTS" arrow="M0 0V6L6 3Z" className="left-0 h-[69px] w-[10px] border-r-0" />
                    </div>
                </div>
                <OperationPanel />
            </div>
        </main>
    );
}

function StatusArea() {
    return (
        <footer>
            <div className="h-[57px] bg-[#f3f3f3] pt-1 text-[#333]">
                <p className="pl-[2px] leading-[11px]">Press eject or stop button to erase the screen.</p>
                <div className="mt-[11px] ml-1 flex items-start gap-2">
                    <button type="button" aria-label="Properties" className="flex h-[17px] w-[16px] items-center justify-center bg-[#e6e6e6]">
                        <Svg size={10}><path d="M1.500 .500H8.500V9.500H1.500ZM3 3H7M3 5H7M3 7H7" stroke="#777" /></Svg>
                    </button>
                    <span className="leading-[11px]">Properties of 'srf_mill1'</span>
                </div>
            </div>
            <div className="flex h-[6px] justify-between overflow-hidden border-t border-[#111] bg-[#2b2b2d] pt-px leading-[9px] text-[#ddd]">
                <div className="flex gap-[28px]">
                    <span>For Help</span>
                    <span>Dim</span>
                </div>
                <div className="flex gap-[13px] pr-[41px]">
                    <span>100 MMPM</span>
                    <span>900 RPM</span>
                    <span className="ml-[8px]">0:00:00 | endmillM1200</span>
                </div>
            </div>
        </footer>
    );
}

export default function App() {
    return (
        <div className="flex min-h-screen flex-col bg-black pt-[17px] pb-[17px] font-['Liberation_Sans',Arial,sans-serif] text-[7px] leading-[11px]">
            <div className="flex flex-1 flex-col bg-[#e4e4e4]">
                <TitleBar />
                <MenuTabs />
                <Ribbon />
                <div className="flex flex-1">
                    <StepsPanel />
                    <div className="w-[3px] shrink-0" />
                    <Workspace />
                </div>
                <StatusArea />
            </div>
        </div>
    );
}
